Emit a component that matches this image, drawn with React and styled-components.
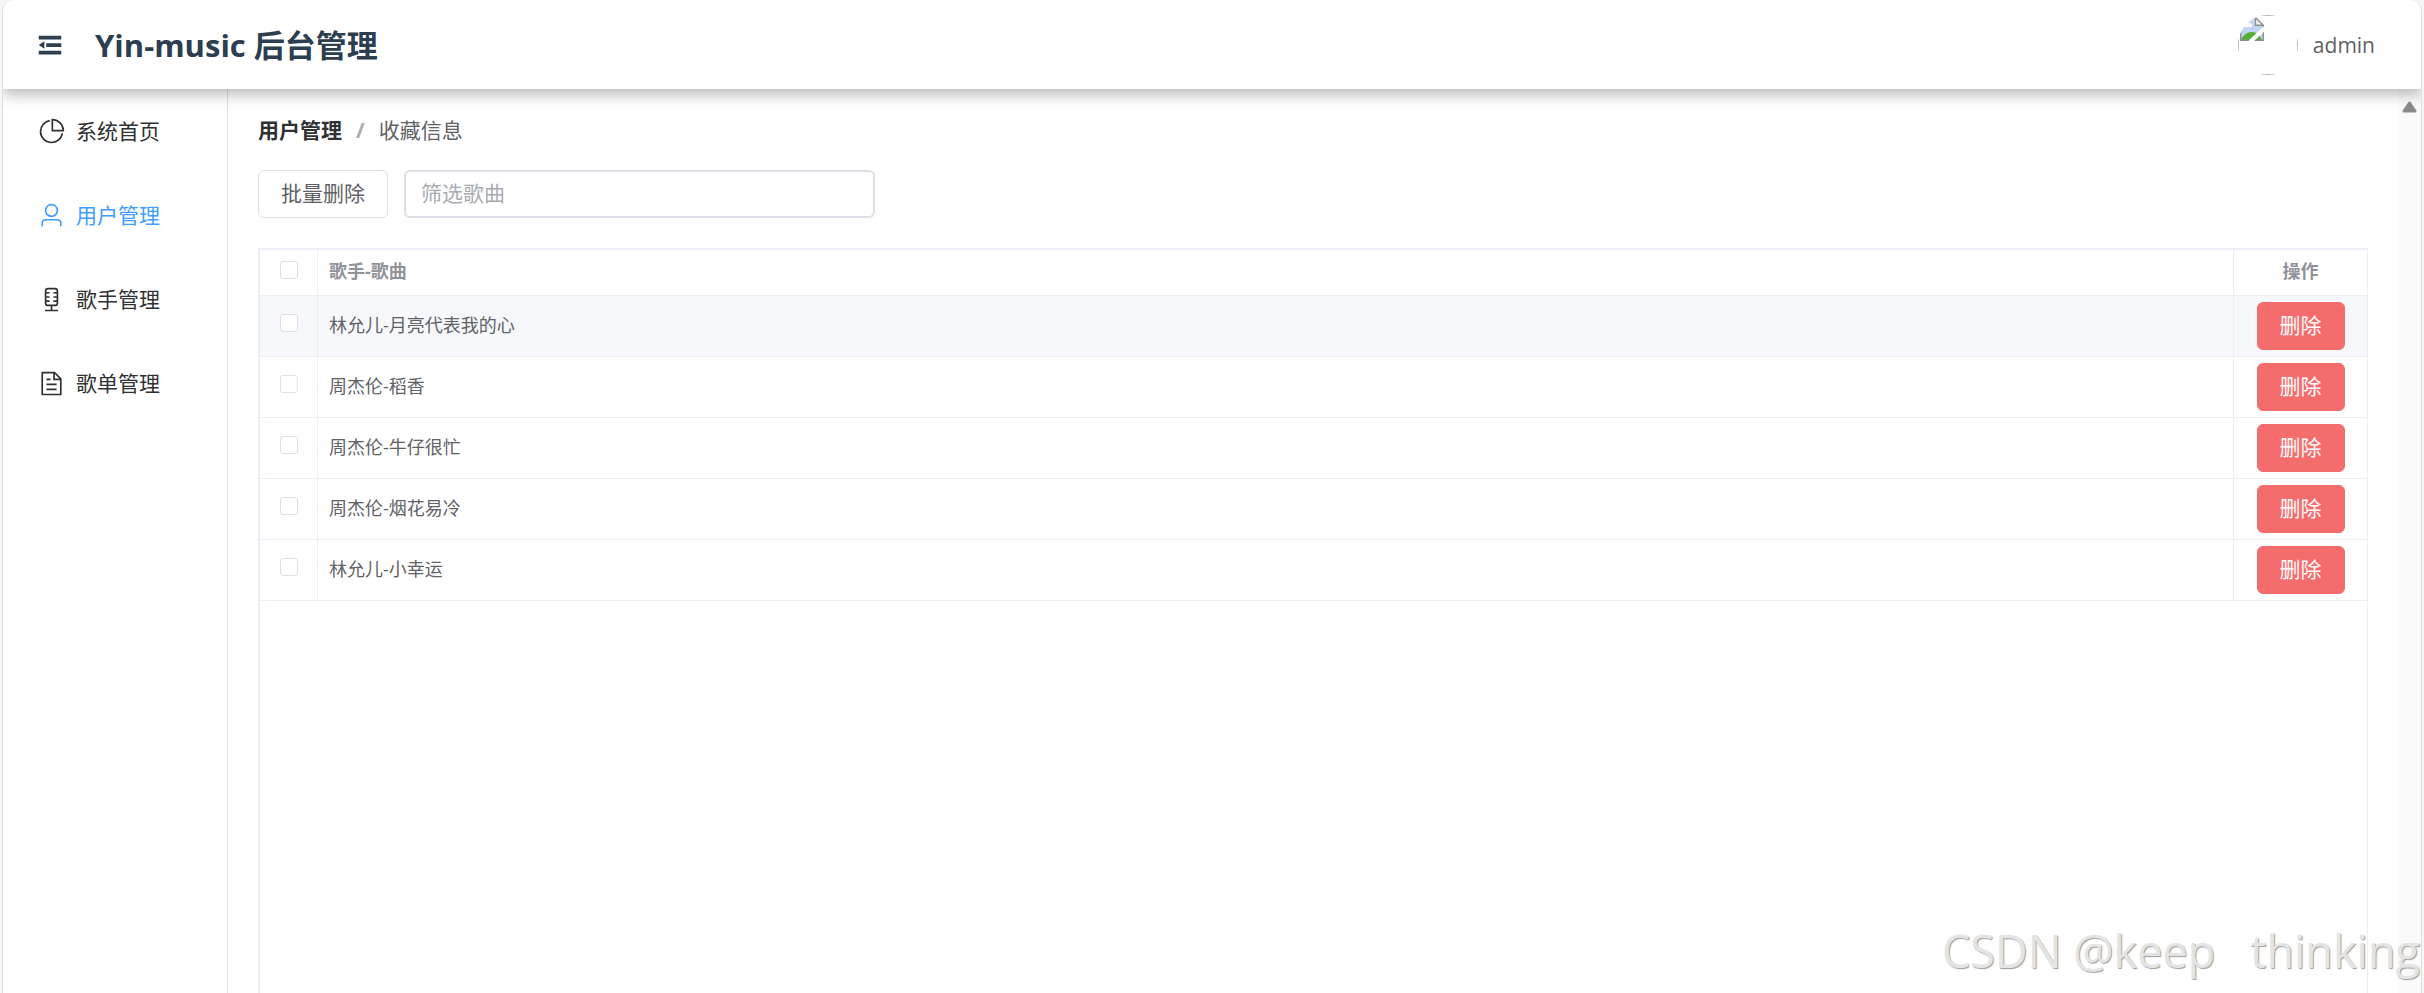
import React, { useState } from 'react'
import styled, { createGlobalStyle, ThemeProvider } from 'styled-components'

const theme = {
  colors: {
    title: '#2c3e50',
    text: '#303133',
    regular: '#606266',
    muted: '#909399',
    placeholder: '#a8abb2',
    border: '#dcdfe6',
    line: '#ebeef5',
    hover: '#f6f8fc',
    primary: '#409eff',
    danger: '#f56c6c',
  },
  fonts: {
    sans: '"Open Sans", "Noto Sans CJK SC", sans-serif',
  },
}

const GlobalStyle = createGlobalStyle`
  * {
    box-sizing: border-box;
  }

  body {
    margin: 0;
    background: #f6f6f6;
  }

  button,
  input {
    font: inherit;
  }
`

const Frame = styled.div`
  position: relative;
  display: flex;
  flex-direction: column;
  height: 100vh;
  margin: 0 2px;
  overflow: hidden;
  border: solid #dedede;
  border-width: 0 1px;
  border-radius: 12px 12px 0 0;
  background: #fff;
  font-family: ${({ theme }) => theme.fonts.sans};
  font-size: 21px;
  color: ${({ theme }) => theme.colors.text};
`

const Header = styled.header`
  position: relative;
  z-index: 1;
  display: flex;
  align-items: center;
  flex: none;
  height: 89px;
  padding: 0 46px 0 32px;
  background: #fff;
  box-shadow: 0 3px 15px 1px rgba(0, 0, 0, 0.32);
`

const CollapseButton = styled.button`
  display: flex;
  margin-right: 30px;
  padding: 0;
  border: 0;
  background: none;
  color: ${({ theme }) => theme.colors.title};
  cursor: pointer;
`

const Icon = styled.svg`
  flex: none;
  width: ${({ $size }) => $size}px;
  height: ${({ $size }) => $size}px;
  fill: currentColor;
`

const Title = styled.h1`
  margin: 0;
  font-size: 31px;
  font-weight: bold;
  line-height: 40px;
  color: ${({ theme }) => theme.colors.title};
`

const UserInfo = styled.div`
  display: flex;
  align-items: center;
  gap: 15px;
  margin-left: auto;
  line-height: 30px;
  color: ${({ theme }) => theme.colors.regular};
`

const Avatar = styled.div`
  width: 60px;
  height: 60px;
  overflow: hidden;
  border-radius: 50%;
`

const AvatarBox = styled.div`
  height: 100%;
  padding: 1px;
  border: 1px solid #b4b4b4;

  svg {
    display: block;
  }
`

const Body = styled.div`
  display: flex;
  flex: 1;
  min-height: 0;
`

const Sidebar = styled.nav`
  flex: none;
  width: 225px;
  border-right: 1px solid ${({ theme }) => theme.colors.border};
`

const MenuItem = styled.a`
  display: flex;
  align-items: center;
  gap: 11px;
  height: 84px;
  padding-left: 35px;
  color: ${({ $active, theme }) =>
    $active ? theme.colors.primary : theme.colors.text};
  text-decoration: none;
`

const MenuLabel = styled.span`
  padding-bottom: 2px;
`

const Main = styled.main`
  display: flex;
  flex: 1;
  flex-direction: column;
  min-width: 0;
  padding: 26px 30px 0;
`

const Breadcrumb = styled.div`
  display: flex;
  gap: 14px;
  margin-bottom: 25px;
  line-height: 30px;
  color: ${({ theme }) => theme.colors.regular};

  a {
    font-weight: bold;
    color: ${({ theme }) => theme.colors.text};
    text-decoration: none;
  }

  span {
    font-weight: bold;
    color: ${({ theme }) => theme.colors.placeholder};
  }
`

const Toolbar = styled.div`
  display: flex;
  gap: 16px;
  margin-bottom: 30px;
`

const Button = styled.button`
  height: 48px;
  padding: 0 22px 2px;
  border: 1px solid
    ${({ $danger, theme }) =>
      $danger ? theme.colors.danger : theme.colors.border};
  border-radius: 6px;
  background: ${({ $danger, theme }) => ($danger ? theme.colors.danger : '#fff')};
  line-height: 30px;
  color: ${({ $danger, theme }) => ($danger ? '#fff' : theme.colors.regular)};
  cursor: pointer;
`

const SearchInput = styled.input`
  width: 471px;
  height: 48px;
  padding: 0 15px 2px;
  border: 2px solid ${({ theme }) => theme.colors.border};
  border-radius: 6px;
  outline: none;
  color: ${({ theme }) => theme.colors.regular};

  &::placeholder {
    color: ${({ theme }) => theme.colors.placeholder};
  }
`

const TableBox = styled.div`
  flex: 1;
  border: solid ${({ theme }) => theme.colors.line};
  border-width: 2px 1px 0 2px;
`

const Table = styled.table`
  width: 100%;
  border-spacing: 0;
  table-layout: fixed;
  color: ${({ theme }) => theme.colors.regular};
`

const Cell = styled.td`
  width: ${({ $width }) => $width || 'auto'};
  height: 61px;
  padding: 0 11px 3px;
  border: solid ${({ theme }) => theme.colors.line};
  border-width: 0 1px 1px 0;
  font-size: 18px;
  line-height: 24px;
  text-align: left;

  &:last-child {
    border-right: 0;
  }
`

const HeadCell = styled(Cell)`
  height: 46px;
  font-weight: bold;
  text-align: ${({ $center }) => ($center ? 'center' : 'left')};
  color: ${({ theme }) => theme.colors.muted};
`

const ActionCell = styled(Cell)`
  padding-bottom: 0;
  font-size: 21px;
  text-align: center;
`

const Row = styled.tr`
  background: ${({ $highlighted, theme }) =>
    $highlighted ? theme.colors.hover : '#fff'};
`

const Checkbox = styled.input`
  display: block;
  appearance: none;
  width: 18px;
  height: 18px;
  margin: 0 auto 3px;
  border: 1px solid ${({ theme }) => theme.colors.border};
  border-radius: 3px;
  background: #fff;

  &:checked {
    border-color: ${({ theme }) => theme.colors.primary};
    background: ${({ theme }) => theme.colors.primary};
  }
`

const ScrollTrack = styled.div`
  flex: none;
  width: 23px;
  padding-top: 12px;
  background: #fafafa;

  svg {
    display: block;
    margin: 0 auto;
  }
`

const Watermark = styled.div`
  position: absolute;
  right: 1px;
  bottom: 12px;
  z-index: 2;
  font-size: 45px;
  line-height: 60px;
  white-space: pre;
  color: #e4e4e4;
  text-shadow: 1px 1px 1px #9c9c9c;
  pointer-events: none;
`

const icons = {
  fold: 'M896 192H128v128h768V192zm0 256H384v128h512V448zm0 256H128v128h768V704zM320 384 128 512l192 128V384z',
  pie: 'M448 68.48v64.832A384.128 384.128 0 0 0 512 896a384.128 384.128 0 0 0 378.688-320h64.768A448.128 448.128 0 0 1 64 512 448.128 448.128 0 0 1 448 68.48zM576 97.28V448h350.72A384.064 384.064 0 0 0 576 97.28zM512 64V33.152A448 448 0 0 1 990.848 512H512V64z',
  user: 'M512 512a192 192 0 1 0 0-384 192 192 0 0 0 0 384zm0 64a256 256 0 1 1 0-512 256 256 0 0 1 0 512zm320 320v-96a96 96 0 0 0-96-96H288a96 96 0 0 0-96 96v96a32 32 0 1 1-64 0v-96a160 160 0 0 1 160-160h448a160 160 0 0 1 160 160v96a32 32 0 1 1-64 0z',
  mic: 'M480 704h160a64 64 0 0 0 64-64v-32h-96a32 32 0 0 1 0-64h96v-96h-96a32 32 0 0 1 0-64h96v-96h-96a32 32 0 0 1 0-64h96v-32a64 64 0 0 0-64-64H384a64 64 0 0 0-64 64v32h96a32 32 0 0 1 0 64h-96v96h96a32 32 0 0 1 0 64h-96v96h96a32 32 0 0 1 0 64h-96v32a64 64 0 0 0 64 64h96zm64 64v128h192a32 32 0 1 1 0 64H288a32 32 0 1 1 0-64h192V768h-96a128 128 0 0 1-128-128V192A128 128 0 0 1 384 64h256a128 128 0 0 1 128 128v448a128 128 0 0 1-128 128h-96z',
  document:
    'M832 384H576V128H192v768h640V384zm-26.496-64L640 154.496V320h165.504zM160 64h480l256 256v608a32 32 0 0 1-32 32H160a32 32 0 0 1-32-32V96a32 32 0 0 1 32-32zm160 448h384v64H320v-64zm0-192h160v64H320v-64zm0 384h384v64H320v-64z',
}

const menu = [
  { icon: 'pie', label: '系统首页' },
  { icon: 'user', label: '用户管理' },
  { icon: 'mic', label: '歌手管理' },
  { icon: 'document', label: '歌单管理' },
]

const songs = [
  '林允儿-月亮代表我的心',
  '周杰伦-稻香',
  '周杰伦-牛仔很忙',
  '周杰伦-烟花易冷',
  '林允儿-小幸运',
]

const SvgIcon = ({ name, size }) => (
  <Icon viewBox='0 0 1024 1024' $size={size} aria-hidden='true'>
    <path d={icons[name]} />
  </Icon>
)

const BrokenImage = () => (
  <svg width='24' height='24' viewBox='0 0 24 24' aria-hidden='true'>
    <path d='M1 1h15l7 7v15H1z' fill='#c3d5f5' />
    <path d='M4 9a3 3 0 0 1 5-3 3 3 0 0 1 3 4H4z' fill='#fff' />
    <path d='M1 23c2-5 6-8 11-8 4 0 8 3 10 8z' fill='#56ad33' />
    <path d='M16 1v7h7z' fill='#f4f4f4' />
    <path
      d='M.7.7h15l7.600 7.600v15H.7zM15.500.7v7.500h7.500'
      fill='none'
      stroke='#8e8e8e'
      strokeWidth='1.4'
    />
    <path d='M25 11 10 25' stroke='#fff' strokeWidth='4' />
  </svg>
)

const App = () => {
  const [keyword, setKeyword] = useState('')
  const [selected, setSelected] = useState([])

  const rows = songs.filter((song) => song.includes(keyword))

  const toggle = (song) =>
    setSelected(
      selected.includes(song)
        ? selected.filter((item) => item !== song)
        : [...selected, song]
    )

  return (
    <ThemeProvider theme={theme}>
      <GlobalStyle />
      <Frame>
        <Header>
          <CollapseButton type='button' aria-label='折叠菜单'>
            <SvgIcon name='fold' size={30} />
          </CollapseButton>
          <Title>Yin-music 后台管理</Title>
          <UserInfo>
            <Avatar>
              <AvatarBox>
                <BrokenImage />
              </AvatarBox>
            </Avatar>
            admin
          </UserInfo>
        </Header>

        <Body>
          <Sidebar>
            {menu.map(({ icon, label }) => (
              <MenuItem key={icon} href='#' $active={icon === 'user'}>
                <SvgIcon name={icon} size={27} />
                <MenuLabel>{label}</MenuLabel>
              </MenuItem>
            ))}
          </Sidebar>

          <Main>
            <Breadcrumb>
              <a href='#'>用户管理</a>
              <span>/</span>
              收藏信息
            </Breadcrumb>

            <Toolbar>
              <Button type='button'>批量删除</Button>
              <SearchInput
                aria-label='筛选歌曲'
                placeholder='筛选歌曲'
                value={keyword}
                onChange={(e) => setKeyword(e.target.value)}
              />
            </Toolbar>

            <TableBox>
              <Table>
                <thead>
                  <tr>
                    <HeadCell as='th' $width='58px' $center>
                      <Checkbox
                        type='checkbox'
                        aria-label='全选'
                        checked={selected.length === songs.length}
                        onChange={(e) =>
                          setSelected(e.target.checked ? songs : [])
                        }
                      />
                    </HeadCell>
                    <HeadCell as='th'>歌手-歌曲</HeadCell>
                    <HeadCell as='th' $width='133px' $center>
                      操作
                    </HeadCell>
                  </tr>
                </thead>
                <tbody>
                  {rows.map((song) => (
                    <Row key={song} $highlighted={song === songs[0]}>
                      <Cell>
                        <Checkbox
                          type='checkbox'
                          aria-label={song}
                          checked={selected.includes(song)}
                          onChange={() => toggle(song)}
                        />
                      </Cell>
                      <Cell>{song}</Cell>
                      <ActionCell>
                        <Button type='button' $danger>
                          删除
                        </Button>
                      </ActionCell>
                    </Row>
                  ))}
                </tbody>
              </Table>
            </TableBox>
          </Main>

          <ScrollTrack>
            <svg width='15' height='12' viewBox='0 0 15 12' aria-hidden='true'>
              <path
                d='M7.5 2 13 10H2z'
                fill='#8a8a8a'
                stroke='#8a8a8a'
                strokeWidth='3'
                strokeLinejoin='round'
              />
            </svg>
          </ScrollTrack>
        </Body>

        <Watermark>{'CSDN @keep\u00a0\u00a0\u00a0thinking'}</Watermark>
      </Frame>
    </ThemeProvider>
  )
}

export default App
